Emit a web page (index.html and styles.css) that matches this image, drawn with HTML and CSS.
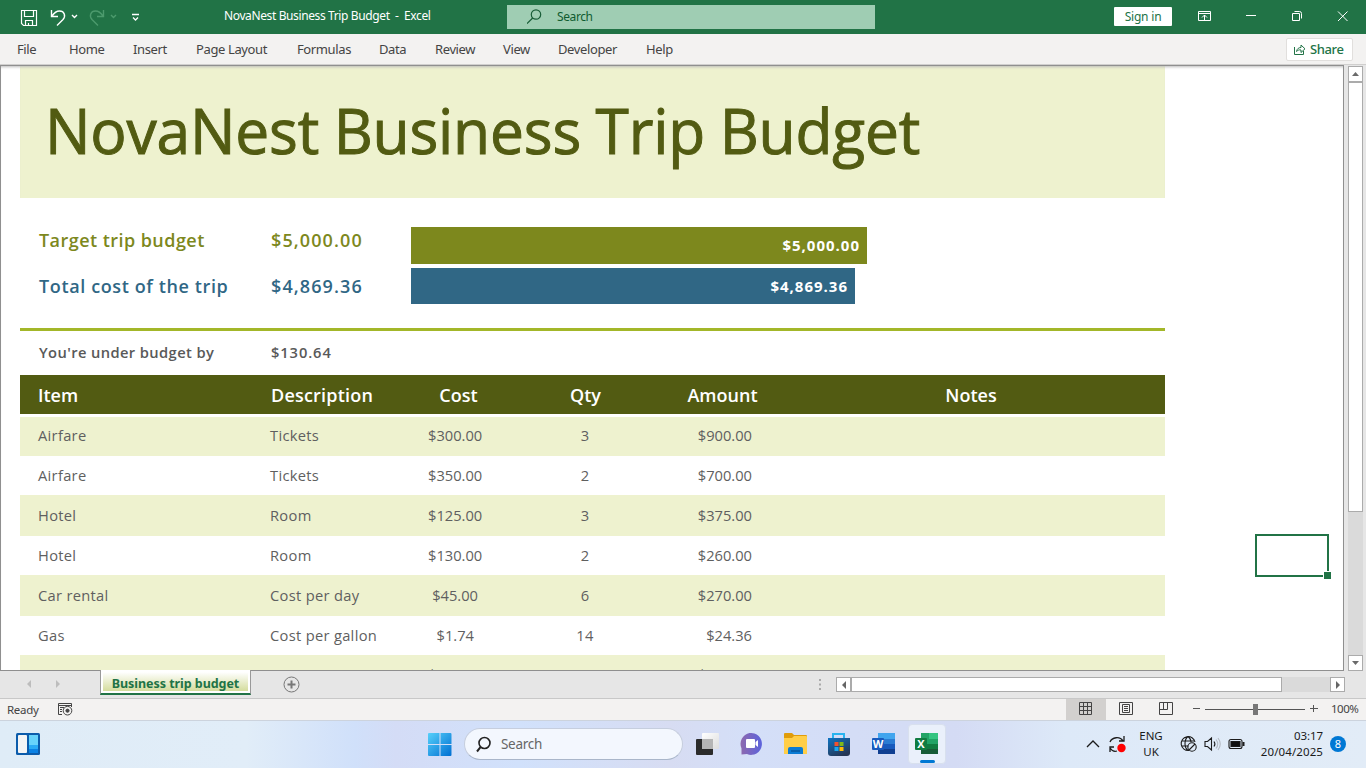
FILE: index.html
```html
<!DOCTYPE html>
<html lang="en">
<head>
<meta charset="utf-8">
<title>NovaNest Business Trip Budget - Excel</title>
<link rel="stylesheet" href="styles.css">
</head>
<body>
<div class="app">
  <header class="titlebar">
    <svg class="quick" width="150" height="34" viewBox="0 0 150 34" fill="none" stroke="#fff" stroke-width="1.2">
      <path d="M21.5 10.5h15v15h-13l-2-2zM24.5 10.5v6h9v-6M25.5 25.5v-5h7v5M28.5 25v-2"/>
      <path d="M51.500 10v6.500h6.500M52 16c2-3 4-5 7.500-5 5 0 6.500 5 3.500 8.500l-6 6" stroke-width="1.400"/>
      <path d="M72 15l2.500 2.500L77 15" stroke-width="1.400"/>
      <g stroke="#4c9a6d"><path d="M103.500 10v6.500H97M103 16c-2-3-4-5-7.500-5-5 0-6.500 5-3.500 8.500l6 6" stroke-width="1.400"/><path d="M111 15l2.500 2.500L116 15" stroke-width="1.400"/></g>
      <path d="M132 14.500h7M133 17.500l2.500 2.500 2.500-2.500" stroke-width="1.300"/>
    </svg>
    <div class="doc-title">NovaNest Business Trip Budget&nbsp; -&nbsp; Excel</div>
    <div class="search">
      <svg width="16" height="16" viewBox="0 0 16 16" fill="none" stroke="#185c37" stroke-width="1.200"><circle cx="9" cy="5.500" r="4.700"/><path d="M5.700 9L0 14.700"/></svg>
      <span>Search</span>
    </div>
    <div class="signin">Sign in</div>
    <svg class="winctl" width="170" height="34" viewBox="0 0 170 34" fill="none" stroke="#fff">
      <path d="M2.500 11.500h12v9h-12zM2.500 13.500h12M8.500 20v-5M6 17.500l2.500-2.500 2.500 2.500M50 15.500h10M96.500 13.500h7v7h-7zM98.500 11.500h5q2 0 2 2v5M142 11.500l9.500 9.500M151.500 11.500L142 21"/>
    </svg>
  </header>
  <nav class="menu">
    <span>File</span><span>Home</span><span>Insert</span><span>Page Layout</span><span>Formulas</span><span>Data</span><span>Review</span><span>View</span><span>Developer</span><span>Help</span>
    <div class="share"><svg width="13" height="13" viewBox="0 0 13 13" fill="none" stroke="#217346"><path d="M1.500 4v7.500h9V8M3.500 8.500C4 5.500 6 4.500 8 4.500V2l4 3.800-4 3.700V7C6 6.500 4.800 7.300 3.500 8.500z"/></svg><span>Share</span></div>
  </nav>
  <main class="workspace">
    <div class="sheet">
      <h1 class="banner"><span>NovaNest Business Trip Budget</span></h1>
      <section class="summary">
        <div class="summary-text target"><span class="lab1">Target trip budget</span><span class="money">$5,000.00</span></div>
        <div class="summary-text total"><span class="lab2">Total cost of the trip</span><span class="money">$4,869.36</span></div>
        <div class="chart"><div class="bar bar-target">$5,000.00</div><div class="bar bar-total">$4,869.36</div></div>
      </section>
      <div class="under"><span class="lab3">You're under budget by</span><span class="diff">$130.64</span></div>
      <div class="row head"><span>Item</span><span class="hdesc">Description</span><span class="c">Cost</span><span class="c">Qty</span><span class="c">Amount</span><span class="c">Notes</span></div>
      <div class="rows">
        <div class="row stripe first"><span>Airfare</span><span>Tickets</span><span class="n">$300.00</span><span class="c">3</span><span class="n">$900.00</span></div>
        <div class="row"><span>Airfare</span><span>Tickets</span><span class="n">$350.00</span><span class="c">2</span><span class="n">$700.00</span></div>
        <div class="row stripe"><span>Hotel</span><span>Room</span><span class="n">$125.00</span><span class="c">3</span><span class="n">$375.00</span></div>
        <div class="row"><span>Hotel</span><span>Room</span><span class="n">$130.00</span><span class="c">2</span><span class="n">$260.00</span></div>
        <div class="row stripe"><span>Car rental</span><span>Cost per day</span><span class="n n45">$45.00</span><span class="c">6</span><span class="n">$270.00</span></div>
        <div class="row"><span>Gas</span><span>Cost per gallon</span><span class="n n1">$1.74</span><span class="c">14</span><span class="n">$24.36</span></div>
        <div class="row stripe cut"><span></span><span></span><span>$</span><span></span><span class="cut-amount">$</span></div>
      </div>
      <div class="cell-cursor"></div>
    </div>
    <div class="vscroll">
      <div class="sbtn"><svg width="7" height="4"><path d="M0 4L3.500 0 7 4z" fill="#6a6a6a"/></svg></div>
      <div class="vthumb"></div>
      <div class="vtrough"></div>
      <div class="sbtn"><svg width="7" height="4"><path d="M0 0h7L3.500 4z" fill="#6a6a6a"/></svg></div>
    </div>
  </main>
  <div class="tabs">
    <svg class="tabnav" width="100" height="27" fill="#bdbdbd"><path d="M31 9v8l-4-4zM56 9v8l4-4z"/></svg>
    <div class="tab"><span>Business trip budget</span></div>
    <svg class="addtab" width="17" height="17" fill="none" stroke="#777"><circle cx="8.500" cy="8.500" r="7.500"/><path d="M8.500 4.500v8M4.500 8.500h8" stroke-width="2"/></svg>
    <svg class="grip" width="2" height="12" fill="#aaa"><path d="M0 0h2v2H0zM0 4.500h2v2H0zM0 9h2v2H0z"/></svg>
    <div class="hscroll">
      <div class="hbtn"><svg width="4" height="8"><path d="M4 0v8L0 4z" fill="#666"/></svg></div>
      <div class="hthumb"></div>
      <div class="htrough"></div>
      <div class="hbtn"><svg width="4" height="8"><path d="M0 0v8l4-4z" fill="#666"/></svg></div>
    </div>
  </div>
  <footer class="status">
    <span class="ready">Ready</span>
    <svg class="macro" width="16" height="14" fill="none" stroke="#444"><path d="M5 12.500H1.500v-11h13V5M1.500 3.500h13M3 5.500h4M3 7.500h2M3 9.500h2"/><circle cx="10.500" cy="8.700" r="4.300"/><circle cx="10.500" cy="8.700" r="1.600" fill="#444"/></svg>
    <div class="view-on"><svg width="13" height="13" fill="none" stroke="#444"><path d="M.5.5h12v12H.5zM4.500.5v12M8.500.5v12M.5 4.500h12M.5 8.500h12"/></svg></div>
    <svg class="view2" width="14" height="13" fill="none" stroke="#444"><path d="M.5.500h13v12H.5zM3.500 2.500h7v8h-7zM5 4.500h4M5 6.500h4M5 8.500h4"/></svg>
    <svg class="view3" width="14" height="13" fill="none" stroke="#444"><path d="M.5.500h13v12H.5zM.5 7.500h8v-7M4.500.500v7"/></svg>
    <svg class="zoom" width="130" height="20" fill="none" stroke="#555"><path d="M2 8.500h7M14 9.500h100M119 8.500h8M122.500 5v7"/><path d="M62 4h5v11h-5z" fill="#777" stroke="none"/></svg>
    <span class="pct">100%</span>
  </footer>
  <div class="taskbar">
    <svg class="widgets" width="24" height="22" viewBox="0 0 24 22"><rect width="24" height="22" rx="1.500" fill="#0c5cab"/><rect x="2" y="2" width="9" height="18" rx="1" fill="#f5f5f5"/><path d="M13 2h9v10h-9z" fill="#67d3fb"/><path d="M13 12h9v4h-9z" fill="#2aabf5"/><path d="M13 16h9v4h-9z" fill="#0a82e5"/></svg>
    <svg class="start" width="24" height="23" viewBox="0 0 23 23" preserveAspectRatio="none"><defs><linearGradient id="win" x2="1" y2="1"><stop stop-color="#56d0fa"/><stop offset="1" stop-color="#006fd2"/></linearGradient></defs><path d="M0 1q0-1 1-1h10v11H0zM12 0h9.500q1 0 1 1v10H12zM0 12h11v11H1q-1 0-1-1zM12 12h10.500v10q0 1-1 1H12z" fill="url(#win)"/></svg>
    <div class="tsearch"><svg width="16" height="17" fill="none" stroke="#222" stroke-width="1.600"><circle cx="8.500" cy="7" r="5.500"/><path d="M4.500 11.200L1 15.500" stroke-width="2"/></svg><span>Search</span></div>
    <svg class="tv" width="24" height="24"><defs><linearGradient id="tw" x2="1" y2="1"><stop stop-color="#fff"/><stop offset="1" stop-color="#ddd"/></linearGradient></defs><rect x="6" y="1" width="17" height="16" rx="1" fill="url(#tw)"/><rect x="0" y="7" width="17" height="16" rx="1" fill="#2b2b2b"/><path d="M6 7h11v10H6z" fill="#b5b5b5"/></svg>
    <svg class="chat" width="24" height="24"><defs><linearGradient id="ch" x2="1"><stop stop-color="#8e69ae"/><stop offset="1" stop-color="#5c63dc"/></linearGradient></defs><path d="M1.500 22.500v-6A10.700 11 0 1 1 7 22z" fill="url(#ch)"/><rect x="6" y="7" width="9" height="9" rx="1" fill="#fff"/><path d="M15.500 10l2.500-2v7l-2.500-2z" fill="#fff"/></svg>
    <svg class="folder" width="24" height="24"><path d="M0 2q0-1 1-1h7l2 2h12q1 0 1 1v5H0z" fill="#e09c0b"/><path d="M0 6h8l2-2h12q1 0 1 1v17H0z" fill="#ffce48"/><path d="M4 22v-5q0-2 2-2h11q2 0 2 2v5z" fill="#0b7bd4"/><path d="M7 18h9v2H7z" fill="#075fab"/></svg>
    <svg class="store" width="24" height="25"><defs><linearGradient id="st" x2=".6" y2="1"><stop stop-color="#0d74c4"/><stop offset="1" stop-color="#263654"/></linearGradient></defs><path d="M6 7V2h11v5" fill="none" stroke="#29b4ef" stroke-width="2"/><path d="M1 6h22v15q0 3-3 3H4q-3 0-3-3z" fill="url(#st)"/><path d="M7.500 10h4v4h-4z" fill="#f2522e"/><path d="M12.500 10h4v4h-4z" fill="#80b918"/><path d="M7.500 15h4v4h-4z" fill="#1aa6ef"/><path d="M12.500 15h4v4h-4z" fill="#ffb907"/></svg>
    <svg class="office word" width="24" height="24"><path d="M6 1h17v6H6z" fill="#41a5ee"/><path d="M6 7h17v5H6z" fill="#2b7cd3"/><path d="M6 12h17v5H6z" fill="#185abd"/><path d="M6 17h17v5H6z" fill="#103f91"/><rect y="6" width="12" height="12" rx="1" fill="#185abd"/><text x="6" y="16" text-anchor="middle">W</text></svg>
    <div class="active"><svg class="office" width="24" height="24"><path d="M6 1h17v6H6z" fill="#21a366"/><path d="M14 1h9v6h-9z" fill="#33c481"/><path d="M6 7h17v5H6z" fill="#21a366"/><path d="M6 12h17v5H6z" fill="#107c41"/><path d="M6 17h17v5H6z" fill="#185c37"/><rect y="6" width="12" height="12" rx="1" fill="#107c41"/><text x="6" y="16" text-anchor="middle">X</text></svg><i></i></div>
    <svg class="tray1" width="46" height="28" fill="none" stroke="#1b1b1b" stroke-width="1.300"><path d="M1 17l6-6 6 6"/><path d="M24 12c2-5 10-6 13-1M38 6v5h-5M31 21c-3 1-5 0-7-3M24 22v-5h4"/><circle cx="35.500" cy="18" r="4.200" fill="#f00" stroke="none"/></svg>
    <div class="lang"><span>ENG</span><span>UK</span></div>
    <svg class="tray2" width="66" height="22" fill="none" stroke="#1b1b1b" stroke-width="1.100"><path d="M9 17.500A7 7 0 1 1 15 9M1.500 8h13M1.500 13h7M8 3.500c-4 3-4 11 0 14M8 3.500c2 1.500 3 3.500 3 5.500"/><circle cx="12" cy="14" r="4.200"/><path d="M9 17l6-6"/><path d="M25 8.500h2.500L31.500 5v12l-4-3.500H25zM34 8.500q1.800 2.500 0 5"/><path d="M36 6.500q3.500 4.500 0 9M38 5q4.500 6 0 12" stroke="#b4bac2"/><rect x="49" y="6.500" width="13" height="9" rx="2"/><path d="M51 8.500h9v5h-9z" fill="#111"/><path d="M63.500 9v4" stroke-width="2"/></svg>
    <div class="clock"><span>03:17</span><span class="date">20/04/2025</span></div>
    <div class="badge">8</div>
  </div>
</div>
</body>
</html>
```
FILE: styles.css
```css
* { box-sizing: border-box; }
body { margin: 0; font-family: "Noto Sans", sans-serif; color: #444; overflow: hidden; }
svg { display: block; flex: none; }
.app { width: 1366px; height: 768px; display: flex; flex-direction: column; background: #e6e6e6; }
.app > * { flex: none; }
.titlebar { height: 34px; background: #217346; display: flex; align-items: center; color: #fff; font-size: 12px; white-space: nowrap; }
.doc-title { width: 283px; margin-left: 74px; letter-spacing: -0.38px; padding-bottom: 3px; }
.search { width: 368px; height: 24px; margin-top: -1px; background: #9fcdb3; color: #0f5c30; display: flex; align-items: center; padding-left: 20px; gap: 14px; letter-spacing: -0.4px; }
.signin { width: 58px; height: 19px; margin: -1px 0 0 239px; background: #fff; color: #217346; border-radius: 1px; text-align: center; line-height: 20px; letter-spacing: -0.2px; }
.winctl { margin-left: 24px; }
.menu { height: 31px; background: #f3f2f1; border-bottom: 1px solid #d0cfce; display: grid; grid-template-columns: 52px 64px 63px 101px 82px 56px 68px 55px 88px 640px 68px; padding-left: 17px; align-items: center; font-size: 13px; letter-spacing: -0.38px; white-space: nowrap; }
.share { width: 67px; height: 23px; background: #fff; border: 1px solid #e1dfdd; border-radius: 2px; color: #217346; display: flex; align-items: center; gap: 4px; padding-left: 6px; font-weight: 500; }
.workspace { height: 606px; display: flex; }
.sheet { width: 1344px; border: 1px solid #8f8f8f; background: #fff; padding-left: 19px; position: relative; overflow: hidden; font-family: "Open Sans", sans-serif; box-shadow: inset 0 3px 3px -2px #bbb; }
.banner { margin: 0; width: 1145px; height: 132px; background: #eef2cf; color: #525b12; font-size: 63px; font-weight: 400; line-height: 128px; padding-left: 25px; letter-spacing: -0.2px; word-spacing: -1px; white-space: nowrap; box-shadow: inset 0 3px 3px -2px #bbb; }
.banner span { display: inline-block; transform: scaleX(0.96); transform-origin: 0 50%; -webkit-text-stroke: 1px #525b12; }
.summary { width: 1145px; height: 133px; border-bottom: 3px solid #a3b729; display: grid; grid-template-columns: 391px 1fr; grid-template-rows: 19px 46px 46px; }
.summary-text { grid-column: 1; display: grid; grid-template-columns: 232px 1fr; padding-left: 19px; align-items: center; font-size: 18px; font-weight: 600; white-space: nowrap; }
.target { grid-row: 2; color: #7d881d; }
.total { grid-row: 3; color: #306785; }
.lab1 { letter-spacing: 0.45px; }
.lab2 { letter-spacing: 0.62px; }
.money { letter-spacing: 1.1px; }
.chart { grid-column: 2; grid-row: 2 / 4; padding-top: 10px; display: flex; flex-direction: column; gap: 4px; }
.bar { height: 37px; color: #fff; font-weight: 700; font-size: 15px; letter-spacing: 1px; text-align: right; line-height: 37px; padding-right: 7px; }
.bar-target { width: 456px; background: #7d881d; }
.bar-total { width: 444px; height: 36px; background: #306785; }
.under { height: 44px; display: grid; grid-template-columns: 232px 1fr; padding: 0 0 2px 19px; align-items: center; font-size: 14.700px; font-weight: 600; color: #595959; }
.lab3 { letter-spacing: 0.4px; }
.diff { letter-spacing: 0.9px; }
.row { width: 1145px; height: 39px; display: grid; padding: 0 0 2px 18px; align-items: center; font-size: 14.700px; color: #5f5f5f; white-space: nowrap; letter-spacing: 0.3px; }
.stripe { background: #eef2cf; height: 41px; }
.first { height: 39px; padding-bottom: 4px; }
.rows { padding-top: 3px; }
.head { background: #525b12; color: #fff; font-size: 18px; font-weight: 600; grid-template-columns: 233px 137px 101px 153px 121px 376px; padding-bottom: 0; letter-spacing: 0; }
.hdesc { letter-spacing: 0.2px; }
.c { text-align: center; }
.n { text-align: right; letter-spacing: 0; }
.n45 { padding-right: 4px; }
.n1 { padding-right: 8px; }
.row:not(.head) { grid-template-columns: 232px 158px 54px 156px 114px; }
.row:not(.head) .c { padding-left: 50px; }
.cut { padding-bottom: 4px; }
.cut-amount { padding-left: 60px; }
.cell-cursor { position: absolute; left: 1254px; top: 468px; width: 74px; height: 43px; border: 2px solid #217346; }
.cell-cursor::after { content: ""; position: absolute; right: -5px; bottom: -5px; width: 7px; height: 7px; background: #217346; border: 1px solid #fff; }
.vscroll { margin: 1px 0 0 4px; width: 15px; height: 605px; display: flex; flex-direction: column; background: #dadada; }
.sbtn { height: 16px; border: 1px solid #ababab; background: #fff; display: grid; place-items: center; }
.vthumb { height: 430px; border: 1px solid #ababab; background: #fff; }
.vtrough { flex: 1; }
.tabs { height: 28px; background: #e6e6e6; border-bottom: 1px solid #c8c8c8; display: flex; }
.tab { width: 151px; height: 25px; margin-top: -1px; border: solid #999; border-width: 0 1px; border-bottom: 2px solid #217346; background: #fff; padding: 0 2px 2px; position: relative; }
.tab span { display: block; height: 21px; background: linear-gradient(#fff 10%, #d4dc9c); text-align: center; line-height: 27px; font-size: 12.500px; font-weight: 700; color: #217346; letter-spacing: -0.05px; white-space: nowrap; }
.addtab { margin: 5px 0 0 32px; }
.grip { margin: 8px 0 0 519px; }
.hscroll { width: 509px; height: 15px; margin: 6px 0 0 15px; display: flex; background: #dadada; }
.hbtn { width: 15px; border: 1px solid #ababab; background: #fff; display: grid; place-items: center; }
.hthumb { width: 431px; border: 1px solid #ababab; background: #fff; }
.htrough { flex: 1; }
.status { height: 21px; background: #f3f2f1; display: flex; font-size: 11.500px; align-items: center; }
.ready { width: 50px; margin-left: 7px; letter-spacing: -0.3px; }
.view-on { width: 40px; height: 21px; margin-left: 993px; background: #d2d0ce; display: grid; place-items: center; padding: 0 1px 2px 0; }
.view2 { margin: -2px 0 0 13px; }
.view3 { margin: -2px 0 0 26px; }
.zoom { margin-left: 18px; }
.pct { margin: -2px 0 0 10px; letter-spacing: -0.5px; }
.macro { margin: -1px 0 0 0; }
.taskbar { height: 48px; border-top: 1px solid #ccd3dd; background: linear-gradient(90deg, #dfecf7 0, #e1edf8 18%, #d0e0fa 26%, #d4dcf6 29%, #d1e1fb 38%, #d7dcf2 49%, #d4dff8 55%, #d4dbf4 70%, #dde9f8 78%, #e2ecf7 100%); display: flex; align-items: center; color: #1b1b1b; font-size: 12px; padding-bottom: 1px; }
.widgets { margin-left: 16px; }
.start { margin-left: 388px; }
.tsearch { width: 219px; height: 32px; margin-left: 12px; border: 1px solid #c6cede; border-bottom-color: #a9b6ca; border-radius: 16px; background: #f3f7fe; display: flex; align-items: center; padding-left: 11px; gap: 9px; color: #666; font-size: 13.500px; letter-spacing: -0.3px; }
.tv { margin-left: 13px; }
.chat { margin-left: 20px; }
.folder { margin-left: 20px; }
.store { margin-left: 19px; }
.word { margin-left: 21px; }
.office text { font: 700 11px "Open Sans", sans-serif; fill: #fff; }
.active { width: 38px; height: 40px; margin-left: 12px; background: #eaf0fb; border: 1px solid #d8e0ee; border-radius: 4px; display: flex; flex-direction: column; align-items: center; padding-top: 7px; }
.active i { width: 15px; height: 3px; margin-top: 4px; border-radius: 2px; background: #0078d4; }
.tray1 { margin-left: 140px; }
.lang { width: 34px; margin-left: 2px; display: flex; flex-direction: column; text-align: center; line-height: 16px; font-size: 11.500px; }
.tray2 { margin-left: 12px; }
.clock { width: 74px; margin-left: 3px; display: flex; flex-direction: column; text-align: right; line-height: 16px; font-size: 11.500px; letter-spacing: -0.1px; }
.date { letter-spacing: 0.1px; }
.badge { width: 16px; height: 16px; margin-left: 7px; border-radius: 50%; background: #0078d4; color: #fff; text-align: center; font-size: 11px; line-height: 16px; }
```
